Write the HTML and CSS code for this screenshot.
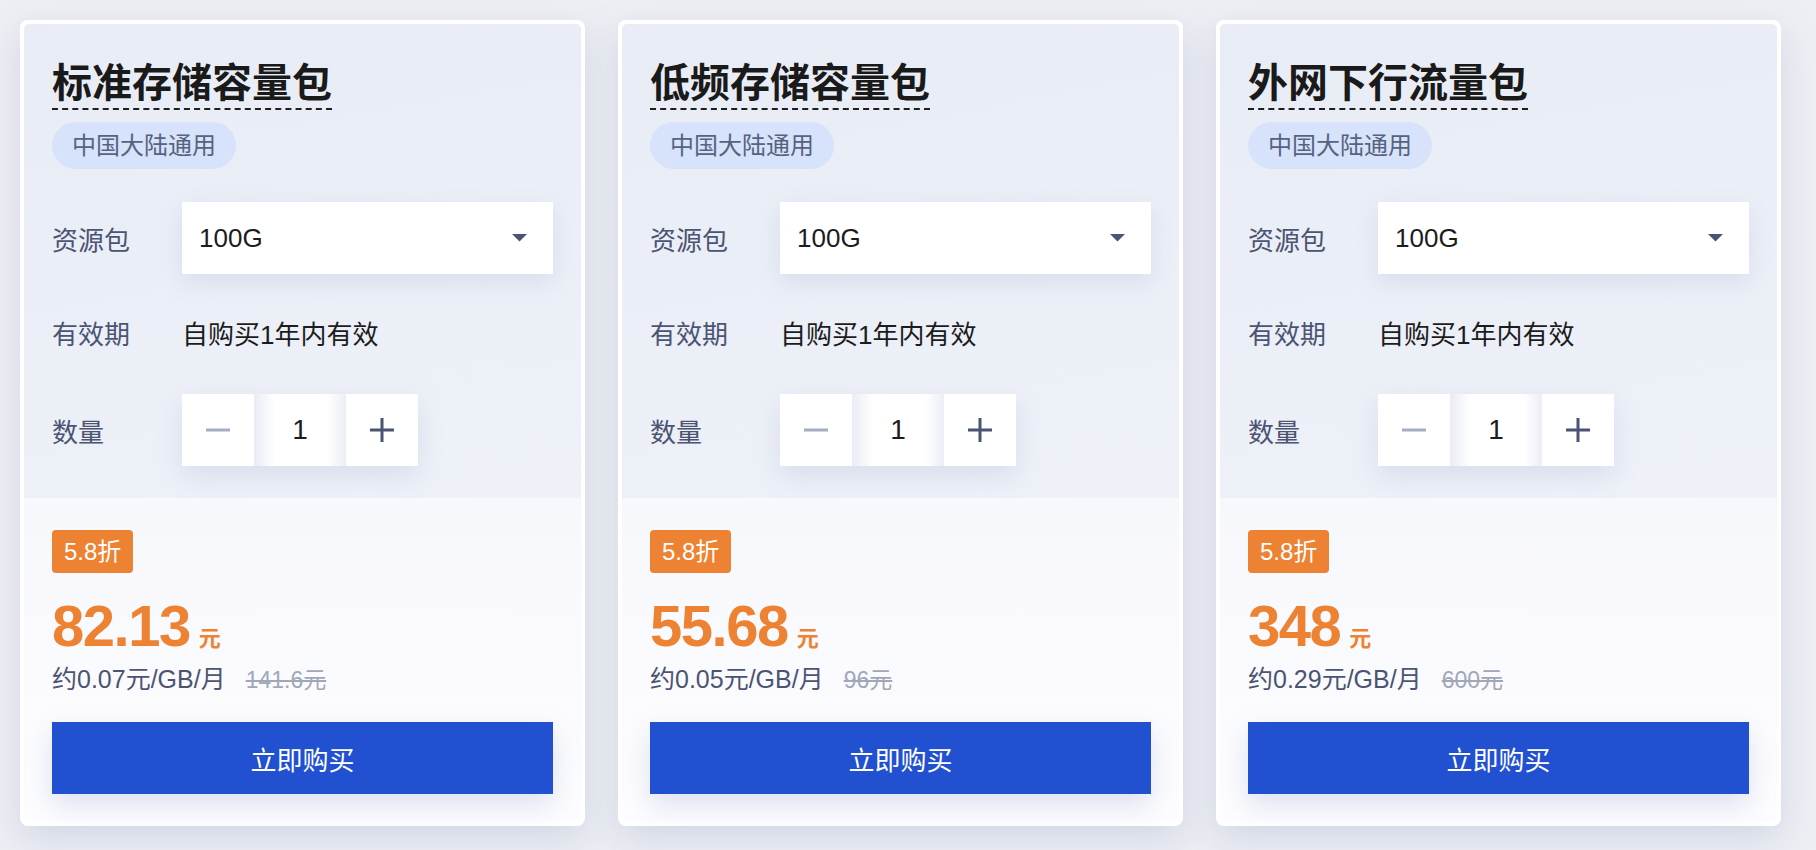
FILE: index.html
```html
<!DOCTYPE html>
<html lang="zh-CN">
<head>
<meta charset="utf-8">
<title>资源包</title>
<link rel="stylesheet" href="styles.css">
</head>
<body>
<div class="cards">
  <div class="card">
    <div class="panel">
      <div class="title-wrap"><h2 class="title">标准存储容量包</h2></div>
      <div class="tag">中国大陆通用</div>
      <div class="rows">
        <div class="row">
          <span class="label">资源包</span>
          <div class="select"><span>100G</span><svg class="arrow" width="15" height="8" viewBox="0 0 15 8"><path d="M0 0H15L7.5 7.5Z" fill="#4b5473"/></svg></div>
        </div>
        <div class="row">
          <span class="label">有效期</span>
          <span class="value">自购买1年内有效</span>
        </div>
        <div class="row">
          <span class="label">数量</span>
          <div class="stepper">
            <div class="step"><svg width="24" height="24" viewBox="0 0 24 24"><path d="M0 12H24" stroke="#a4adc1" stroke-width="3"/></svg></div>
            <div class="num">1</div>
            <div class="step"><svg width="24" height="24" viewBox="0 0 24 24"><path d="M0 12H24M12 0V24" stroke="#4b5473" stroke-width="3"/></svg></div>
          </div>
        </div>
      </div>
    </div>
    <div class="buy">
      <div class="badge">5.8折</div>
      <div class="price"><span class="amount">82.13</span><span class="yuan">元</span></div>
      <div class="unit">约0.07元/GB/月<s class="orig">141.6元</s></div>
      <button class="btn">立即购买</button>
    </div>
  </div>

  <div class="card">
    <div class="panel">
      <div class="title-wrap"><h2 class="title">低频存储容量包</h2></div>
      <div class="tag">中国大陆通用</div>
      <div class="rows">
        <div class="row">
          <span class="label">资源包</span>
          <div class="select"><span>100G</span><svg class="arrow" width="15" height="8" viewBox="0 0 15 8"><path d="M0 0H15L7.5 7.5Z" fill="#4b5473"/></svg></div>
        </div>
        <div class="row">
          <span class="label">有效期</span>
          <span class="value">自购买1年内有效</span>
        </div>
        <div class="row">
          <span class="label">数量</span>
          <div class="stepper">
            <div class="step"><svg width="24" height="24" viewBox="0 0 24 24"><path d="M0 12H24" stroke="#a4adc1" stroke-width="3"/></svg></div>
            <div class="num">1</div>
            <div class="step"><svg width="24" height="24" viewBox="0 0 24 24"><path d="M0 12H24M12 0V24" stroke="#4b5473" stroke-width="3"/></svg></div>
          </div>
        </div>
      </div>
    </div>
    <div class="buy">
      <div class="badge">5.8折</div>
      <div class="price"><span class="amount">55.68</span><span class="yuan">元</span></div>
      <div class="unit">约0.05元/GB/月<s class="orig">96元</s></div>
      <button class="btn">立即购买</button>
    </div>
  </div>

  <div class="card">
    <div class="panel">
      <div class="title-wrap"><h2 class="title">外网下行流量包</h2></div>
      <div class="tag">中国大陆通用</div>
      <div class="rows">
        <div class="row">
          <span class="label">资源包</span>
          <div class="select"><span>100G</span><svg class="arrow" width="15" height="8" viewBox="0 0 15 8"><path d="M0 0H15L7.5 7.5Z" fill="#4b5473"/></svg></div>
        </div>
        <div class="row">
          <span class="label">有效期</span>
          <span class="value">自购买1年内有效</span>
        </div>
        <div class="row">
          <span class="label">数量</span>
          <div class="stepper">
            <div class="step"><svg width="24" height="24" viewBox="0 0 24 24"><path d="M0 12H24" stroke="#a4adc1" stroke-width="3"/></svg></div>
            <div class="num">1</div>
            <div class="step"><svg width="24" height="24" viewBox="0 0 24 24"><path d="M0 12H24M12 0V24" stroke="#4b5473" stroke-width="3"/></svg></div>
          </div>
        </div>
      </div>
    </div>
    <div class="buy">
      <div class="badge">5.8折</div>
      <div class="price"><span class="amount">348</span><span class="yuan">元</span></div>
      <div class="unit">约0.29元/GB/月<s class="orig">600元</s></div>
      <button class="btn">立即购买</button>
    </div>
  </div>
</div>
</body>
</html>
```

FILE: styles.css
```css
* { box-sizing: border-box; }
html, body { margin: 0; padding: 0; }
body {
  background: #edeff4;
  font-family: "Liberation Sans", "Noto Sans CJK SC", sans-serif;
  color: #1c1c1c;
  height: 850px;
  overflow: hidden;
}
.cards {
  display: grid;
  grid-template-columns: repeat(3, 565px);
  column-gap: 33px;
  padding: 20px 0 0 20px;
}
.card {
  background: #fff;
  border-radius: 8px;
  padding: 4px;
  box-shadow: 0 12px 36px rgba(140, 152, 186, 0.28);
  display: flex;
  flex-direction: column;
}
.panel {
  background: linear-gradient(170deg, #e8ecf5 0%, #eef1f8 100%);
  border-radius: 5px 5px 0 0;
  padding: 28px 28px 32px;
}
.title-wrap { display: flex; }
.title {
  margin: 0;
  font-size: 40px;
  line-height: 56px;
  font-weight: 700;
  color: #1a1a1a;
  font-family: "Noto Sans CJK SC", sans-serif;
  border-bottom: 2px dashed #1f1f1f;
}
.tag {
  margin-top: 12px;
  display: inline-block;
  height: 47px;
  line-height: 47px;
  padding: 0 20px;
  border-radius: 24px;
  background: #d6e3fb;
  color: #56627f;
  font-size: 24px;
}
.rows {
  margin-top: 33px;
  display: flex;
  flex-direction: column;
  gap: 24px;
}
.row {
  display: flex;
  align-items: center;
  height: 72px;
}
.row:nth-child(2) { margin-top: -2px; margin-bottom: 2px; }
.label {
  width: 130px;
  flex: none;
  font-size: 26px;
  color: #4b5473;
}
.value {
  font-size: 26px;
  color: #1c1c1c;
}
.select {
  width: 372px;
  height: 72px;
  background: #fff;
  display: flex;
  align-items: center;
  justify-content: space-between;
  padding: 0 26px 0 17px;
  font-size: 26px;
  color: #1c1c1c;
  box-shadow: 0 8px 22px rgba(120, 138, 185, 0.16);
}
.arrow { display: block; }
.stepper {
  display: flex;
  height: 72px;
  box-shadow: 0 10px 26px rgba(120, 138, 185, 0.18);
}
.step {
  width: 72px;
  height: 72px;
  background: #fff;
  display: flex;
  align-items: center;
  justify-content: center;
}
.step svg { display: block; }
.num {
  width: 92px;
  height: 72px;
  display: flex;
  align-items: center;
  justify-content: center;
  font-size: 28px;
  color: #1c1c1c;
  background: linear-gradient(to right, #e9ecf4 0%, #fff 22%, #fff 80%, #eceef5 100%);
}
.buy {
  background: linear-gradient(180deg, #f7f8fc 0%, #fdfdff 100%);
  padding: 32px 28px 28px;
  border-radius: 0 0 5px 5px;
}
.badge {
  display: inline-block;
  height: 43px;
  line-height: 43px;
  padding: 0 12px;
  border-radius: 4px;
  background: #ee8233;
  color: #fff;
  font-size: 24px;
}
.price {
  margin-top: 18px;
  height: 70px;
  line-height: 70px;
  color: #ee8233;
  font-weight: 700;
}
.amount {
  font-size: 58px;
  letter-spacing: -1.5px;
}
.yuan {
  font-size: 22px;
  margin-left: 9px;
}
.unit {
  margin-top: 2px;
  font-size: 25px;
  line-height: 32px;
  color: #4b5473;
}
.orig {
  margin-left: 20px;
  font-size: 23px;
  color: #a0a8b8;
}
.btn {
  margin-top: 26px;
  display: block;
  width: 100%;
  height: 72px;
  border: 0;
  background: #2150d0;
  color: #fff;
  font-family: "Liberation Sans", "Noto Sans CJK SC", sans-serif;
  font-size: 26px;
  box-shadow: 0 12px 28px rgba(110, 130, 185, 0.22);
  cursor: pointer;
}
```
